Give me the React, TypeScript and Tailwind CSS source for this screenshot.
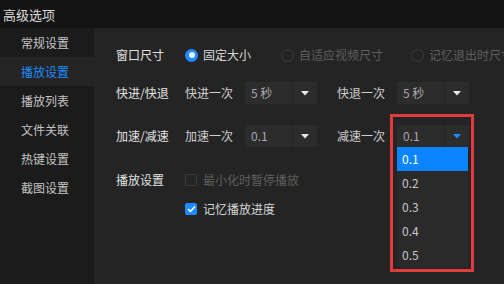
import React from "react";

const menu = ["常规设置", "播放设置", "播放列表", "文件关联", "热键设置", "截图设置"];

function Caret({ blue }: { blue?: boolean }) {
  return (
    <svg width="8" height="5" viewBox="0 0 8 5">
      <path d="M0 0 L8 0 L4 4.5 Z" fill={blue ? "#1e8cff" : "#e8e8e8"} />
    </svg>
  );
}

function Select({ value, open }: { value: string; open?: boolean }) {
  return (
    <div className="relative flex h-[22px] w-[72px] shrink-0 gap-px">
      <div className="flex w-[47px] items-center bg-[#2c2c2c] pl-[6px] text-[#a8a8a8]">{value}</div>
      <div className="flex flex-1 items-center justify-center bg-[#2c2c2c]">
        <Caret blue={open} />
      </div>
      {open && (
        <>
          <div className="absolute left-0 top-[22px] z-10 flex w-[71px] flex-col bg-[#2a2a2a] pb-[1px]">
            {["0.1", "0.2", "0.3", "0.4", "0.5"].map((v, i) => (
              <div
                key={v}
                className={
                  "flex h-[24px] items-center pl-[5px] " +
                  (i === 0 ? "bg-[#0a84ff] text-white" : "text-[#c8c8c8]")
                }
              >
                {v}
              </div>
            ))}
          </div>
          <div className="absolute left-[-7px] top-[-11px] z-20 h-[158px] w-[84px] border-[3px] border-[#e23b3b]" />
        </>
      )}
    </div>
  );
}

function Radio({ checked, label }: { checked?: boolean; label: string }) {
  return (
    <div className="flex shrink-0 items-center gap-[5px] whitespace-nowrap">
      {checked ? (
        <span className="flex h-[13px] w-[13px] shrink-0 items-center justify-center rounded-full bg-[#1e8cff]">
          <span className="h-[6px] w-[6px] rounded-full bg-[#e6f2ff]" />
        </span>
      ) : (
        <span className="h-[13px] w-[13px] shrink-0 rounded-full border border-[#3c3c3c]" />
      )}
      <span className={checked ? "text-[#d8d8d8]" : "text-[#5e5e5e]"}>{label}</span>
    </div>
  );
}

function Checkbox({ checked, label }: { checked?: boolean; label: string }) {
  return (
    <div className="flex items-center gap-[6px] whitespace-nowrap">
      {checked ? (
        <span className="flex h-[12px] w-[12px] items-center justify-center rounded-[2px] bg-[#1e8cff]">
          <svg width="9" height="8" viewBox="0 0 9 8">
            <path d="M1 4 L3.5 6.3 L8 1.5" stroke="white" strokeWidth="1.6" fill="none" />
          </svg>
        </span>
      ) : (
        <span className="h-[12px] w-[12px] rounded-[2px] border border-[#3a3a3a]" />
      )}
      <span className={checked ? "text-[#d8d8d8]" : "text-[#5e5e5e]"}>{label}</span>
    </div>
  );
}

export default function App() {
  return (
    <div
      className="flex h-[284px] w-[504px] flex-col overflow-hidden bg-[#141414] text-[12px] leading-none"
      style={{ fontFamily: '"Noto Sans CJK SC", "Noto Sans", sans-serif' }}
    >
      {/* title */}
      <div className="flex h-[28px] shrink-0 items-center pl-[3px] text-[13px] text-[#dcdcdc]">高级选项</div>

      <div className="flex flex-1">
        {/* sidebar */}
        <div className="flex w-[94px] shrink-0 flex-col bg-[#1b1b1b]">
          {menu.map((m, i) => (
            <div
              key={m}
              className={
                "flex h-[29px] items-center pl-[21px] " +
                (i === 1 ? "bg-[#242424] text-[#1e8cff]" : "text-[#c4c4c4]")
              }
            >
              {m}
            </div>
          ))}
        </div>

        {/* main */}
        <div className="flex min-w-0 flex-1 flex-col overflow-hidden bg-[#242424] pl-[22px] pt-[16px]">
          <div className="flex h-[22px] items-center">
            <span className="w-[69px] shrink-0 text-[#e2e2e2]">窗口尺寸</span>
            <Radio checked label="固定大小" />
            <div className="ml-[30px] shrink-0">
              <Radio label="自适应视频尺寸" />
            </div>
            <div className="ml-[28px] shrink-0">
              <Radio label="记忆退出时尺寸" />
            </div>
          </div>

          <div className="mt-[16px] flex h-[22px] items-center">
            <span className="w-[69px] shrink-0 text-[#e2e2e2]">快进/快退</span>
            <span className="w-[60px] shrink-0 text-[#cfcfcf]">快进一次</span>
            <Select value="5 秒" />
            <span className="ml-[20px] w-[60px] shrink-0 text-[#cfcfcf]">快退一次</span>
            <Select value="5 秒" />
          </div>

          <div className="mt-[21px] flex h-[22px] items-center">
            <span className="w-[69px] shrink-0 text-[#e2e2e2]">加速/减速</span>
            <span className="w-[60px] shrink-0 text-[#cfcfcf]">加速一次</span>
            <Select value="0.1" />
            <span className="ml-[20px] w-[60px] shrink-0 text-[#cfcfcf]">减速一次</span>
            <Select value="0.1" open />
          </div>

          <div className="mt-[22px] flex h-[22px] items-center">
            <span className="w-[69px] shrink-0 text-[#e2e2e2]">播放设置</span>
            <Checkbox label="最小化时暂停播放" />
          </div>

          <div className="mt-[7px] flex h-[22px] items-center pl-[69px]">
            <Checkbox checked label="记忆播放进度" />
          </div>
        </div>
      </div>
    </div>
  );
}
